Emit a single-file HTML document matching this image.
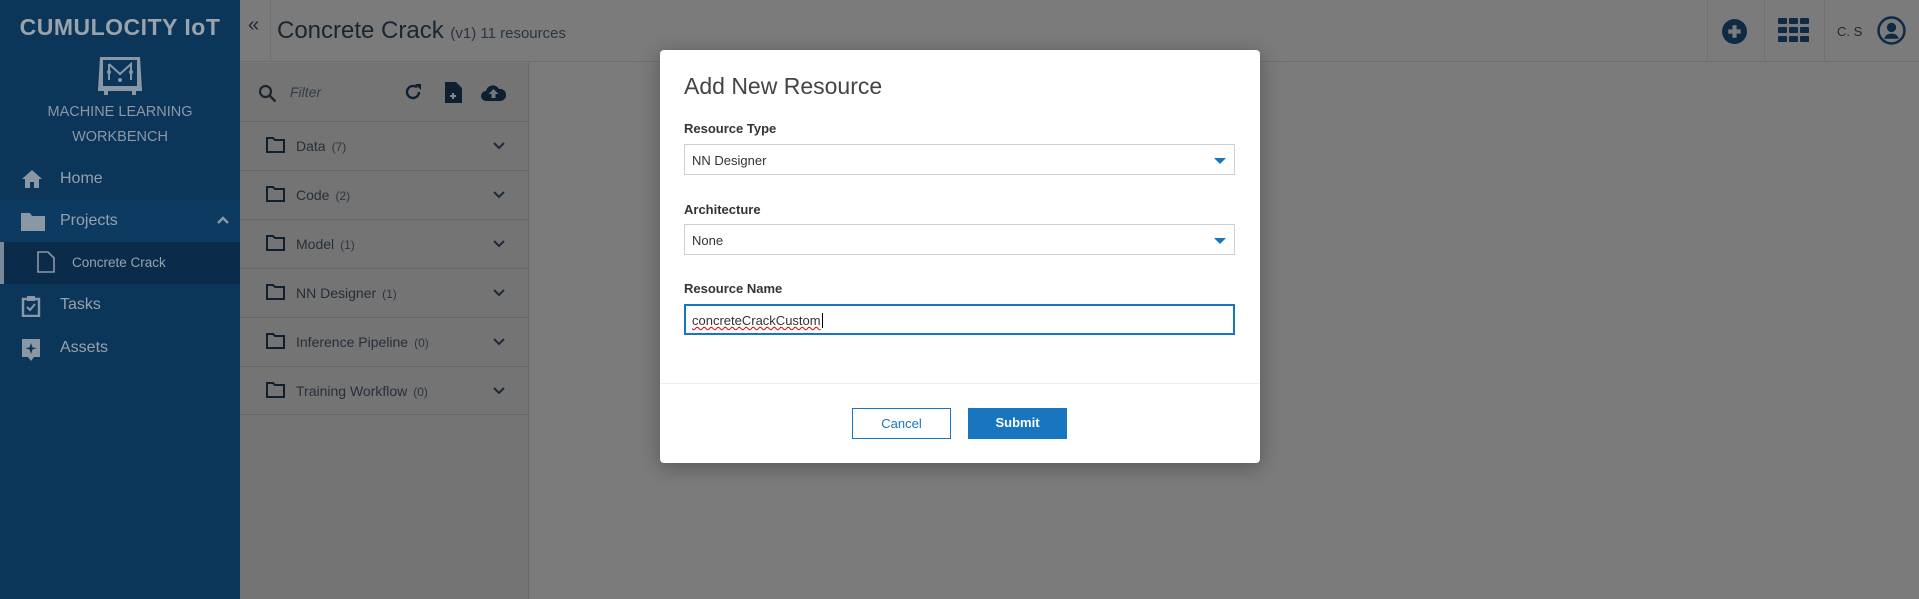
<!DOCTYPE html>
<html><head><meta charset="utf-8"><style>
*{box-sizing:border-box;margin:0;padding:0}
body{width:1919px;height:599px;overflow:hidden;background:#7b7b7b;font-family:"Liberation Sans",sans-serif;position:relative}
.sb{position:absolute;left:0;top:0;width:240px;height:599px;background:#0c3659;color:#8c9aa8}
.brand{position:absolute;top:14px;left:0;width:240px;text-align:center;font-weight:bold;font-size:23px;color:#9aa3ab;letter-spacing:0.5px}
.mlw{position:absolute;top:100px;width:240px;text-align:center;font-size:14.5px;line-height:25px;color:#8a98a6}
.nav{position:absolute;left:0;width:240px;height:42px;font-size:16px;color:#95a2ae}
.nav span{position:absolute;left:60px;top:12px}
.nav svg{position:absolute;left:21px;top:11px}
.hdr{position:absolute;left:240px;top:0;right:0;height:62px;border-bottom:1px solid #6e6e6e;background:#7b7b7b}
.panel{position:absolute;left:240px;top:63px;width:289px;height:536px;background:#747474;border-right:1px solid #676767}
.row{position:absolute;left:0;width:289px;height:49px;border-top:1px solid #686868;font-size:14px;color:#262f38}
.row .t{position:absolute;left:56px;top:16px}
.row .c{font-size:12px;margin-left:6px;color:#2e3640}
.row svg.f{position:absolute;left:26px;top:15px}
.row svg.v{position:absolute;left:253px;top:20px}
.modal{position:absolute;left:660px;top:50px;width:600px;height:413px;background:#fff;border-radius:4px;box-shadow:0 4px 20px rgba(0,0,0,.3)}
.mt{position:absolute;left:24px;top:23px;font-size:23px;color:#444;font-weight:300}
.lbl{position:absolute;left:24px;font-size:13px;font-weight:bold;color:#333}
.sel{position:absolute;left:24px;width:551px;height:31px;border:1px solid #cfcfcf;font-size:13px;color:#333;padding:8px 7px}
.dd:after{content:"";position:absolute;right:8px;top:13px;border-left:6px solid transparent;border-right:6px solid transparent;border-top:6px solid #1776bf}
.inp{border:2px solid #1776bf;padding:7px 6px}
.sep{position:absolute;left:0;right:0;top:333px;border-top:1px solid #eee}
.btn{position:absolute;top:358px;width:99px;height:31px;font-size:13px;text-align:center;line-height:29px}
</style></head><body>
<div class="sb">
<div class="brand">CUMULOCITY IoT</div>
<svg style="position:absolute;left:97px;top:54px" width="46" height="42" viewBox="0 0 46 42"><path d="M3 3h40l2 33H1z" fill="#8a98a6"/><rect x="6" y="6" width="34" height="26" fill="#0c3659"/><path d="M12 10v16M12 10l11 10 11-10v16" stroke="#8a98a6" stroke-width="2" fill="none"/><circle cx="12" cy="18" r="2" fill="#8a98a6"/><circle cx="34" cy="18" r="2" fill="#8a98a6"/><circle cx="23" cy="26" r="2" fill="#8a98a6"/><rect x="1" y="34" width="44" height="3" fill="#8a98a6"/><rect x="7" y="37" width="4" height="4" fill="#8a98a6"/><rect x="35" y="37" width="4" height="4" fill="#8a98a6"/></svg>
<div class="mlw">MACHINE LEARNING<br>WORKBENCH</div>
<div class="nav" style="top:158px"><svg width="22" height="20" viewBox="0 0 22 20"><path d="M11 1L1 10h3v9h5v-6h4v6h5v-9h3z" fill="#8a98a6"/></svg><span>Home</span></div>
<div class="nav" style="top:200px;background:#0d3a60"><svg width="24" height="20" viewBox="0 0 24 20"><path d="M0 2h9l2 3h13v15H0z" fill="#8a98a6"/></svg><span>Projects</span><svg style="left:217px;top:16px" width="12" height="8" viewBox="0 0 12 8"><path d="M1 7l5-5 5 5" stroke="#8a98a6" stroke-width="2.4" fill="none"/></svg></div>
<div class="nav" style="top:242px;background:#0a2c4a;border-left:4px solid #7a8a98"><svg style="left:33px;top:9px" width="18" height="22" viewBox="0 0 18 22"><path d="M1 1h10l6 6v14H1z" stroke="#8a98a6" stroke-width="1.6" fill="none"/></svg><span style="left:68px;font-size:13.5px;top:13px">Concrete Crack</span></div>
<div class="nav" style="top:284px"><svg width="20" height="22" viewBox="0 0 20 22"><path d="M2 4h16v17H2z" stroke="#8a98a6" stroke-width="2.4" fill="none"/><rect x="6" y="1" width="8" height="5" fill="#8a98a6"/><path d="M6 12l3 3 5-6" stroke="#8a98a6" stroke-width="2" fill="none"/></svg><span>Tasks</span></div>
<div class="nav" style="top:327px"><svg width="20" height="24" viewBox="0 0 20 24"><path d="M1 1h18v18h-6l-3 4-3-4H1z" fill="#8a98a6"/><path d="M10 5l1.5 4.5L16 10l-4.5 1.5L10 16l-1.5-4.5L4 10l4.5-.5z" fill="#0c3659"/></svg><span>Assets</span></div>
</div>
<div class="hdr">
<div style="position:absolute;left:8px;top:14px;font-size:20px;color:#1e2a36">«</div>
<div style="position:absolute;left:30px;top:0;height:62px;border-left:1px solid #707070"></div>
<div style="position:absolute;left:37px;top:17px;font-size:24px;color:#1a2530;font-weight:300">Concrete Crack <span style="font-size:15px;color:#2a3440">(v1) 11 resources</span></div>
<div style="position:absolute;left:1467px;top:0;height:62px;border-left:1px solid #707070"></div>
<div style="position:absolute;left:1524px;top:0;height:62px;border-left:1px solid #707070"></div>
<div style="position:absolute;left:1584px;top:0;height:62px;border-left:1px solid #707070"></div>
<svg style="position:absolute;left:1482px;top:19px" width="25" height="25" viewBox="0 0 24 24"><circle cx="12" cy="12" r="12" fill="#0e2a44"/><path d="M12 6v12M6 12h12" stroke="#7b7b7b" stroke-width="4"/></svg>
<svg style="position:absolute;left:1538px;top:18px" width="31" height="24" viewBox="0 0 31 24"><g fill="#0e2a44"><rect x="0" y="0" width="9" height="6" rx="1"/><rect x="11" y="0" width="9" height="6" rx="1"/><rect x="22" y="0" width="9" height="6" rx="1"/><rect x="0" y="9" width="9" height="6" rx="1"/><rect x="11" y="9" width="9" height="6" rx="1"/><rect x="22" y="9" width="9" height="6" rx="1"/><rect x="0" y="18" width="9" height="6" rx="1"/><rect x="11" y="18" width="9" height="6" rx="1"/><rect x="22" y="18" width="9" height="6" rx="1"/></g></svg>
<div style="position:absolute;left:1597px;top:24px;font-size:13px;color:#1e2a36">C. S</div>
<svg style="position:absolute;left:1637px;top:16px" width="29" height="29" viewBox="0 0 28 28"><circle cx="14" cy="14" r="12.5" stroke="#0e2a44" stroke-width="2.4" fill="none"/><circle cx="14" cy="11" r="4.5" fill="#0e2a44"/><path d="M7 22c1-4 4-5 7-5s6 1 7 5z" fill="#0e2a44"/></svg>
</div>
<div class="panel">
<svg style="position:absolute;left:18px;top:21px" width="19" height="19" viewBox="0 0 19 19"><circle cx="7.5" cy="7.5" r="5.5" stroke="#1a2530" stroke-width="2.2" fill="none"/><path d="M11.5 11.5l6 6" stroke="#1a2530" stroke-width="2.4"/></svg>
<div style="position:absolute;left:50px;top:21px;font-style:italic;font-size:14px;color:#333c45">Filter</div>
<svg style="position:absolute;left:164px;top:20px" width="18" height="18" viewBox="0 0 18 18"><path d="M15 9a6 6 0 1 1-2-4.5" stroke="#0e2030" stroke-width="2.4" fill="none"/><path d="M11 1h6v6z" fill="#0e2030"/></svg>
<svg style="position:absolute;left:205px;top:19px" width="17" height="21" viewBox="0 0 17 21"><path d="M0 0h11l6 6v15H0z" fill="#0e2030"/><path d="M5 14h6M8 11v6" stroke="#888" stroke-width="2"/></svg>
<svg style="position:absolute;left:241px;top:21px" width="25" height="17" viewBox="0 0 25 17"><path d="M5 17a5 5 0 0 1 0-10 7 7 0 0 1 13-2 6 6 0 0 1 2 12z" fill="#0e2030"/><path d="M12.5 5l-5 5h3v4h4v-4h3z" fill="#777"/></svg>
<div class="row" style="top:58px"><svg class="f" width="19" height="16" viewBox="0 0 19 16"><path d="M1 1h6l2 2h9v12H1z" stroke="#0e2030" stroke-width="2" fill="none"/></svg><div class="t">Data<span class="c">(7)</span></div><svg class="v" width="12" height="8" viewBox="0 0 12 8"><path d="M1 1l5 5 5-5" stroke="#1e2a36" stroke-width="2" fill="none"/></svg></div>
<div class="row" style="top:107px"><svg class="f" width="19" height="16" viewBox="0 0 19 16"><path d="M1 1h6l2 2h9v12H1z" stroke="#0e2030" stroke-width="2" fill="none"/></svg><div class="t">Code<span class="c">(2)</span></div><svg class="v" width="12" height="8" viewBox="0 0 12 8"><path d="M1 1l5 5 5-5" stroke="#1e2a36" stroke-width="2" fill="none"/></svg></div>
<div class="row" style="top:156px"><svg class="f" width="19" height="16" viewBox="0 0 19 16"><path d="M1 1h6l2 2h9v12H1z" stroke="#0e2030" stroke-width="2" fill="none"/></svg><div class="t">Model<span class="c">(1)</span></div><svg class="v" width="12" height="8" viewBox="0 0 12 8"><path d="M1 1l5 5 5-5" stroke="#1e2a36" stroke-width="2" fill="none"/></svg></div>
<div class="row" style="top:205px"><svg class="f" width="19" height="16" viewBox="0 0 19 16"><path d="M1 1h6l2 2h9v12H1z" stroke="#0e2030" stroke-width="2" fill="none"/></svg><div class="t">NN Designer<span class="c">(1)</span></div><svg class="v" width="12" height="8" viewBox="0 0 12 8"><path d="M1 1l5 5 5-5" stroke="#1e2a36" stroke-width="2" fill="none"/></svg></div>
<div class="row" style="top:254px"><svg class="f" width="19" height="16" viewBox="0 0 19 16"><path d="M1 1h6l2 2h9v12H1z" stroke="#0e2030" stroke-width="2" fill="none"/></svg><div class="t">Inference Pipeline<span class="c">(0)</span></div><svg class="v" width="12" height="8" viewBox="0 0 12 8"><path d="M1 1l5 5 5-5" stroke="#1e2a36" stroke-width="2" fill="none"/></svg></div>
<div class="row" style="top:303px;border-bottom:1px solid #686868"><svg class="f" width="19" height="16" viewBox="0 0 19 16"><path d="M1 1h6l2 2h9v12H1z" stroke="#0e2030" stroke-width="2" fill="none"/></svg><div class="t">Training Workflow<span class="c">(0)</span></div><svg class="v" width="12" height="8" viewBox="0 0 12 8"><path d="M1 1l5 5 5-5" stroke="#1e2a36" stroke-width="2" fill="none"/></svg></div>
</div>
<div class="modal">
<div class="mt">Add New Resource</div>
<div class="lbl" style="top:71px">Resource Type</div>
<div class="sel dd" style="top:94px">NN Designer</div>
<div class="lbl" style="top:152px">Architecture</div>
<div class="sel dd" style="top:174px">None</div>
<div class="lbl" style="top:231px">Resource Name</div>
<div class="sel inp" style="top:254px;height:31px"><span style="text-decoration:underline wavy #d00;text-decoration-thickness:1px">concreteCrackCustom</span><span style="border-left:1px solid #000;margin-left:1px"></span></div>
<div class="sep"></div>
<div class="btn" style="left:192px;border:1px solid #1776bf;color:#1776bf">Cancel</div>
<div class="btn" style="left:308px;background:#1776bf;color:#fff;font-weight:bold">Submit</div>
</div>
</body></html>
